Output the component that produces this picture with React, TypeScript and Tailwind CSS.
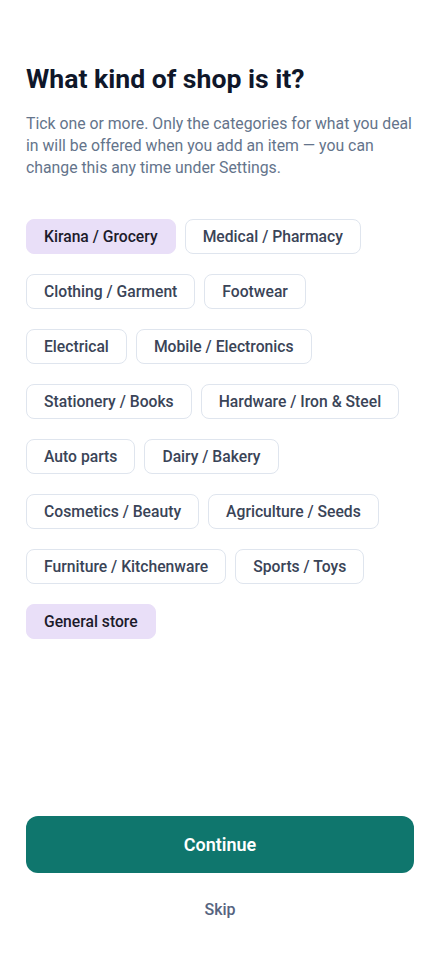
import React, { useState } from 'react';

const CATEGORIES = [
  'Kirana / Grocery',
  'Medical / Pharmacy',
  'Clothing / Garment',
  'Footwear',
  'Electrical',
  'Mobile / Electronics',
  'Stationery / Books',
  'Hardware / Iron & Steel',
  'Auto parts',
  'Dairy / Bakery',
  'Cosmetics / Beauty',
  'Agriculture / Seeds',
  'Furniture / Kitchenware',
  'Sports / Toys',
  'General store',
];

const App: React.FC = () => {
  const [selected, setSelected] = useState<string[]>(['Kirana / Grocery', 'General store']);

  const toggle = (c: string) =>
    setSelected((s) => (s.includes(c) ? s.filter((x) => x !== c) : [...s, c]));

  return (
    <div
      className="flex flex-col min-h-screen bg-white px-[26px] pt-[62px] pb-[36px]"
      style={{ fontFamily: 'Roboto, "Noto Sans", sans-serif' }}
    >
      <h1 className="text-[26.6px] leading-[34px] font-bold text-[#0f172a]">What kind of shop is it?</h1>
      <p className="mt-[17px] -mr-[4px] text-[15.8px] leading-[22px] text-[#64748b]">
        Tick one or more. Only the categories for what you deal in will be offered when you add an
        item — you can change this any time under Settings.
      </p>

      {/* Categories */}
      <div className="mt-[40px] flex flex-wrap gap-x-[9px] gap-y-[20px]">
        {CATEGORIES.map((c) => {
          const on = selected.includes(c);
          return (
            <button
              key={c}
              onClick={() => toggle(c)}
              className={`h-[35px] px-[17px] rounded-[8px] border text-[15.7px] font-medium ${
                on
                  ? 'bg-[#e9dff8] border-[#e9dff8] text-[#1c1b2b]'
                  : 'bg-white border-[#dfe5ee] text-[#3a4457]'
              }`}
            >
              {c}
            </button>
          );
        })}
      </div>

      <button className="mt-auto h-[57px] w-full rounded-[12px] bg-[#0f766d] text-white text-[18px] font-semibold">
        Continue
      </button>
      <button className="mt-[15px] h-[44px] text-[16px] font-medium text-[#56647f]">Skip</button>
    </div>
  );
};

export default App;
